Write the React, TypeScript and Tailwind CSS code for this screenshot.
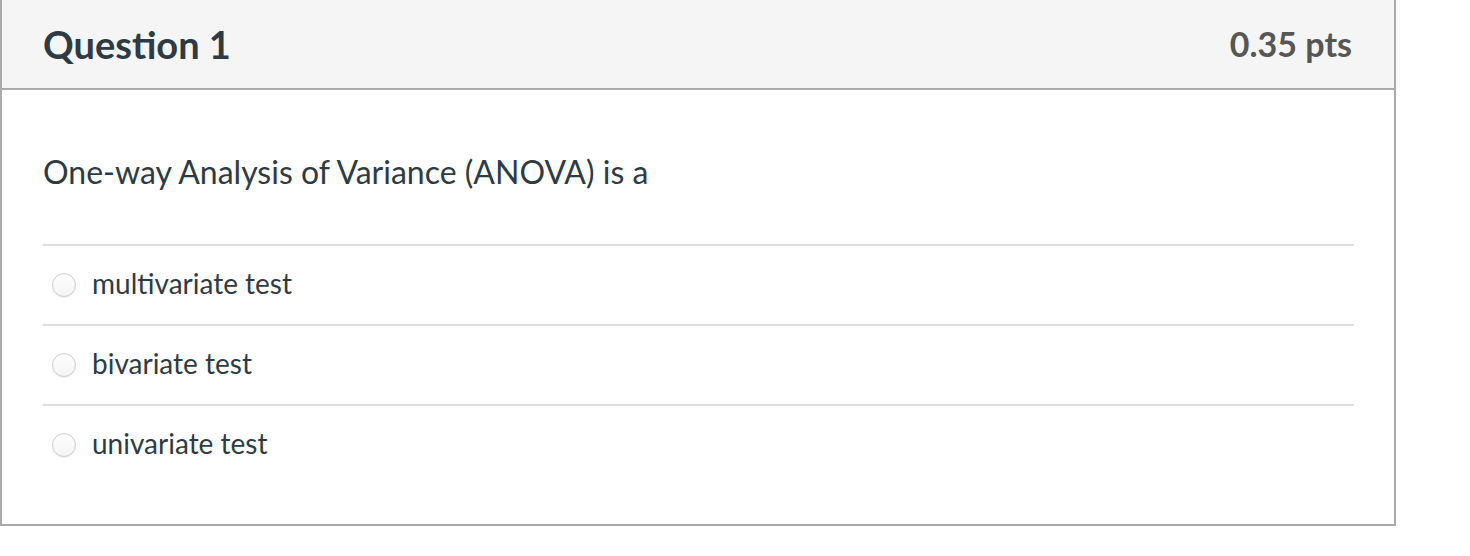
import React from "react";

const answers = ["multivariate test", "bivariate test", "univariate test"];

function Radio() {
  return (
    <span className="ml-[9px] mr-[16px] inline-block h-[24px] w-[24px] shrink-0 rounded-full border border-[#cccccc] bg-gradient-to-b from-white to-[#f4f4f4] shadow-[inset_0_1px_1px_rgba(0,0,0,0.05),0_1px_1px_rgba(0,0,0,0.06)]" />
  );
}

export default function App() {
  return (
    <div className="w-[1470px] h-[556px] bg-white" style={{ fontFamily: "Lato, 'Noto Sans', sans-serif" }}>
      <div className="w-[1396px] border-2 border-t-0 border-[#aaaaaa] bg-white">
        <div className="flex h-[90px] items-center justify-between border-b-2 border-[#aaaaaa] bg-[#f5f5f5] pl-[41px] pr-[42px]">
          <h2 className="text-[38px] font-bold leading-none text-[#2d3b45]">Question 1</h2>
          <div className="text-[34px] font-bold leading-none text-[#565656]">0.35 pts</div>
        </div>
        <div className="pl-[41px] pr-[40px] pb-[40px]">
          <div className="flex h-[154px] items-center pt-[10px] text-[32px] leading-none text-[#2d3b45]">
            One-way Analysis of Variance (ANOVA) is a
          </div>
          {answers.map((a) => (
            <div key={a} className="flex h-[80px] items-center border-t-2 border-[#dddddd] text-[28px] leading-none text-[#2d3b45]">
              <Radio />
              <span className="-mt-[5px]">{a}</span>
            </div>
          ))}
        </div>
      </div>
    </div>
  );
}
